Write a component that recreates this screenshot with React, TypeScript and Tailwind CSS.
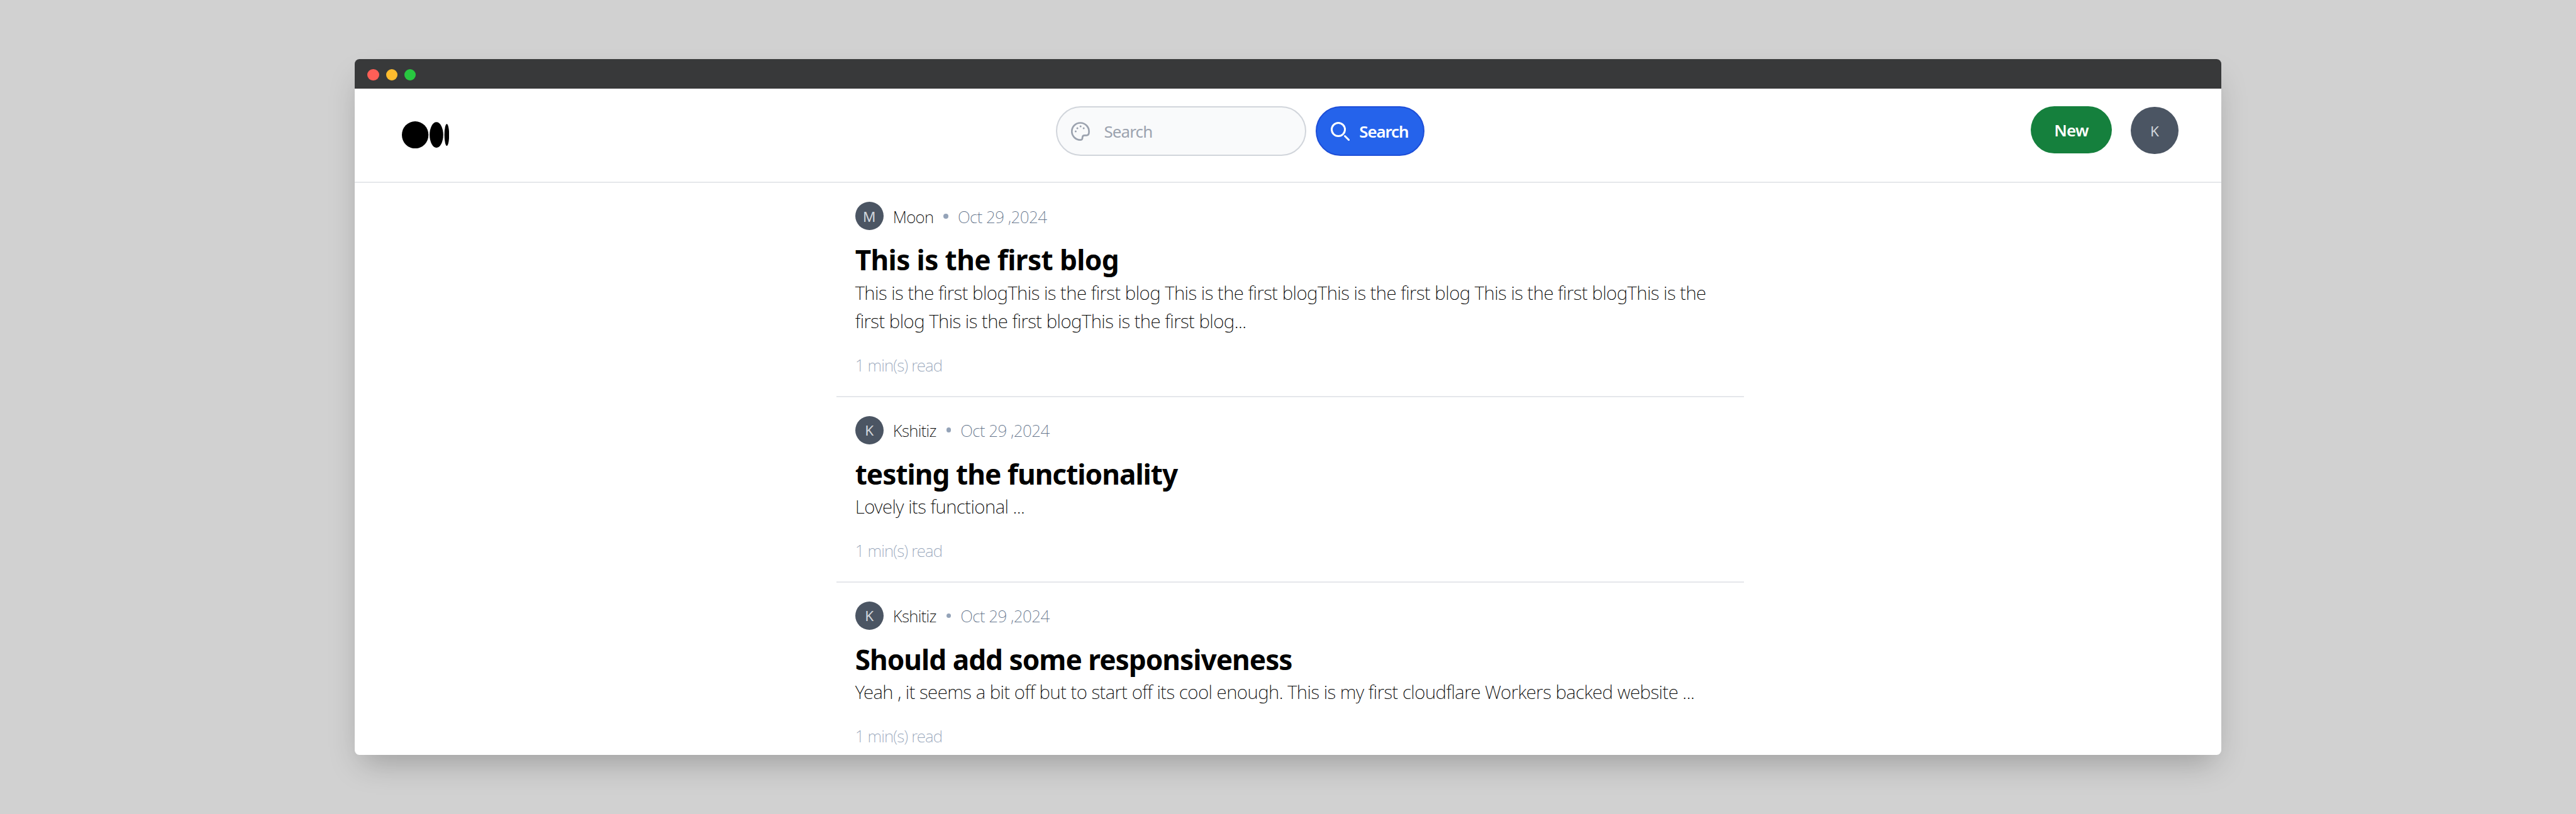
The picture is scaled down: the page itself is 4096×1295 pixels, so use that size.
const posts = [
  {
    author: "Moon",
    title: "This is the first blog",
    titleTracking: "tracking-[-0.330px]",
    lines: [
      "This is the first blogThis is the first blog This is the first blogThis is the first blog This is the first blogThis is the",
      "first blog This is the first blogThis is the first blog...",
    ],
  },
  {
    author: "Kshitiz",
    title: "testing the functionality",
    titleTracking: "tracking-[-0.520px]",
    lines: ["Lovely its functional ..."],
  },
  {
    author: "Kshitiz",
    title: "Should add some responsiveness",
    titleTracking: "tracking-[-0.520px]",
    lines: ["Yeah , it seems a bit off but to start off its cool enough. This is my first cloudflare Workers backed website ..."],
  },
];

function Logo() {
  return (
    <svg className="h-[23px] w-10 shrink-0" viewBox="0 0 80 46" fill="#000">
      <ellipse cx="22.5" cy="23" rx="22.5" ry="23" />
      <ellipse cx="58.5" cy="23" rx="11.5" ry="21.6" />
      <ellipse cx="76" cy="23" rx="4" ry="18.5" />
    </svg>
  );
}

function PaletteIcon() {
  return (
    <svg className="size-4" viewBox="0 0 20 20" fill="none" stroke="#9ca3af" strokeWidth="1.8">
      <path
        d="M10 1a9 9 0 0 0-.3 18c1.500 0 2.200-.5 2.300-1.600l.1-1.200c.1-1.300.9-2 2.200-2h2c1.700 0 2.700-1.200 2.700-3.600A9 9.200 0 0 0 10 1Z"
        strokeLinejoin="round"
      />
      <path d="M4.900 9.900h.01M6.700 6.700h.01M10.100 4.700h.01M13.400 6.700h.01" strokeWidth="2" strokeLinecap="round" />
    </svg>
  );
}

function SearchIcon() {
  return (
    <svg className="size-4" viewBox="0 0 20 20" fill="none" stroke="#fff" strokeWidth="2" strokeLinecap="round">
      <path d="m19 19-4-4m0-7A7 7 0 1 1 1 8a7 7 0 0 1 14 0Z" />
    </svg>
  );
}

function Header() {
  return (
    <header className="flex h-20 shrink-0 border-b-[1.1px] border-[#e5e7eb] pr-[36.500px] pl-10">
      <div className="w-[553.500px] pt-[27.500px]">
        <Logo />
      </div>
      <form className="flex gap-2 pt-[15px]">
        <div className="flex h-[42px] w-[211.500px] items-center rounded-full border-[1.1px] border-[#d1d5db] bg-[#f9fafb] pl-[11.500px]">
          <PaletteIcon />
          <span className="pt-px pl-3 text-[13.800px] tracking-[-0.450px] text-[#9ca3af]">Search</span>
        </div>
        <div className="flex h-[42px] w-[92px] items-center rounded-full border-[1.1px] border-[#1d4ed8] bg-[#2563eb] pl-3">
          <SearchIcon />
          <span className="pt-px pl-2 text-[13.800px] font-semibold tracking-[-0.600px] text-white">Search</span>
        </div>
      </form>
      <div className="ml-auto flex gap-4 pt-[15px]">
        <div className="flex h-10 w-[69px] items-center justify-center rounded-full bg-[#15803d] pt-px text-[13.800px] font-semibold tracking-[-0.400px] text-white">
          New
        </div>
        <div className="mt-[0.500px] flex size-10 items-center justify-center rounded-full bg-[#4b5563] pt-px text-xs text-[#d1d5db]">K</div>
      </div>
    </header>
  );
}

function Post({ author, title, titleTracking, lines }: (typeof posts)[number]) {
  return (
    <article className="border-b-[1.1px] border-[#e5e7eb] p-4">
      <div className="flex h-6 items-center">
        <div className="flex size-6 items-center justify-center rounded-full bg-[#4b5563] pt-px text-xs text-[#d1d5db]">{author[0]}</div>
        <span className="pt-[1.500px] pl-2 text-[13.800px] font-extralight tracking-[-0.350px] text-black">{author}</span>
        <span className="mr-2 ml-[8.500px] size-1 rounded-full bg-[#94a3b8]" />
        <span className="pt-[1.500px] text-[13.800px] font-extralight tracking-[-0.280px] text-[#64748b]">Oct 29 ,2024</span>
      </div>
      <h2 className={`pt-[9px] text-[23.500px] leading-8 font-bold text-black ${titleTracking}`}>{title}</h2>
      <div className="-mt-[0.500px]">
        {lines.map((line) => (
          <p key={line} className="text-[15.700px] leading-6 font-extralight tracking-[-0.270px] whitespace-nowrap text-black">
            {line}
          </p>
        ))}
      </div>
      <p className="-mb-[0.500px] pt-4 text-[13.800px] leading-5 font-extralight tracking-[-0.450px] text-[#94a3b8]">1 min(s) read</p>
    </article>
  );
}

export default function App() {
  return (
    <div className="h-screen w-screen overflow-hidden bg-[#d1d1d1] font-['Noto_Sans',sans-serif]">
      <div className="flex flex-col items-center pt-[50px] [zoom:1.87933]">
        <main className="flex h-[589px] w-[1579.500px] flex-col overflow-hidden rounded bg-white shadow-[0_12.5px_25px_-6px_rgba(0,0,0,0.25)]">
          <div className="flex h-[25px] shrink-0 items-center gap-[5.800px] bg-[#38393a] pt-[1.500px] pl-[10.900px]">
            <span className="size-[9.800px] rounded-full bg-[#ff5f57]" />
            <span className="size-[9.800px] rounded-full bg-[#febc2e]" />
            <span className="size-[9.800px] rounded-full bg-[#28c840]" />
          </div>
          <Header />
          <section className="ml-[407.500px] w-3xl shrink-0">
            {posts.map((post) => (
              <Post key={post.title} {...post} />
            ))}
          </section>
        </main>
      </div>
    </div>
  );
}
